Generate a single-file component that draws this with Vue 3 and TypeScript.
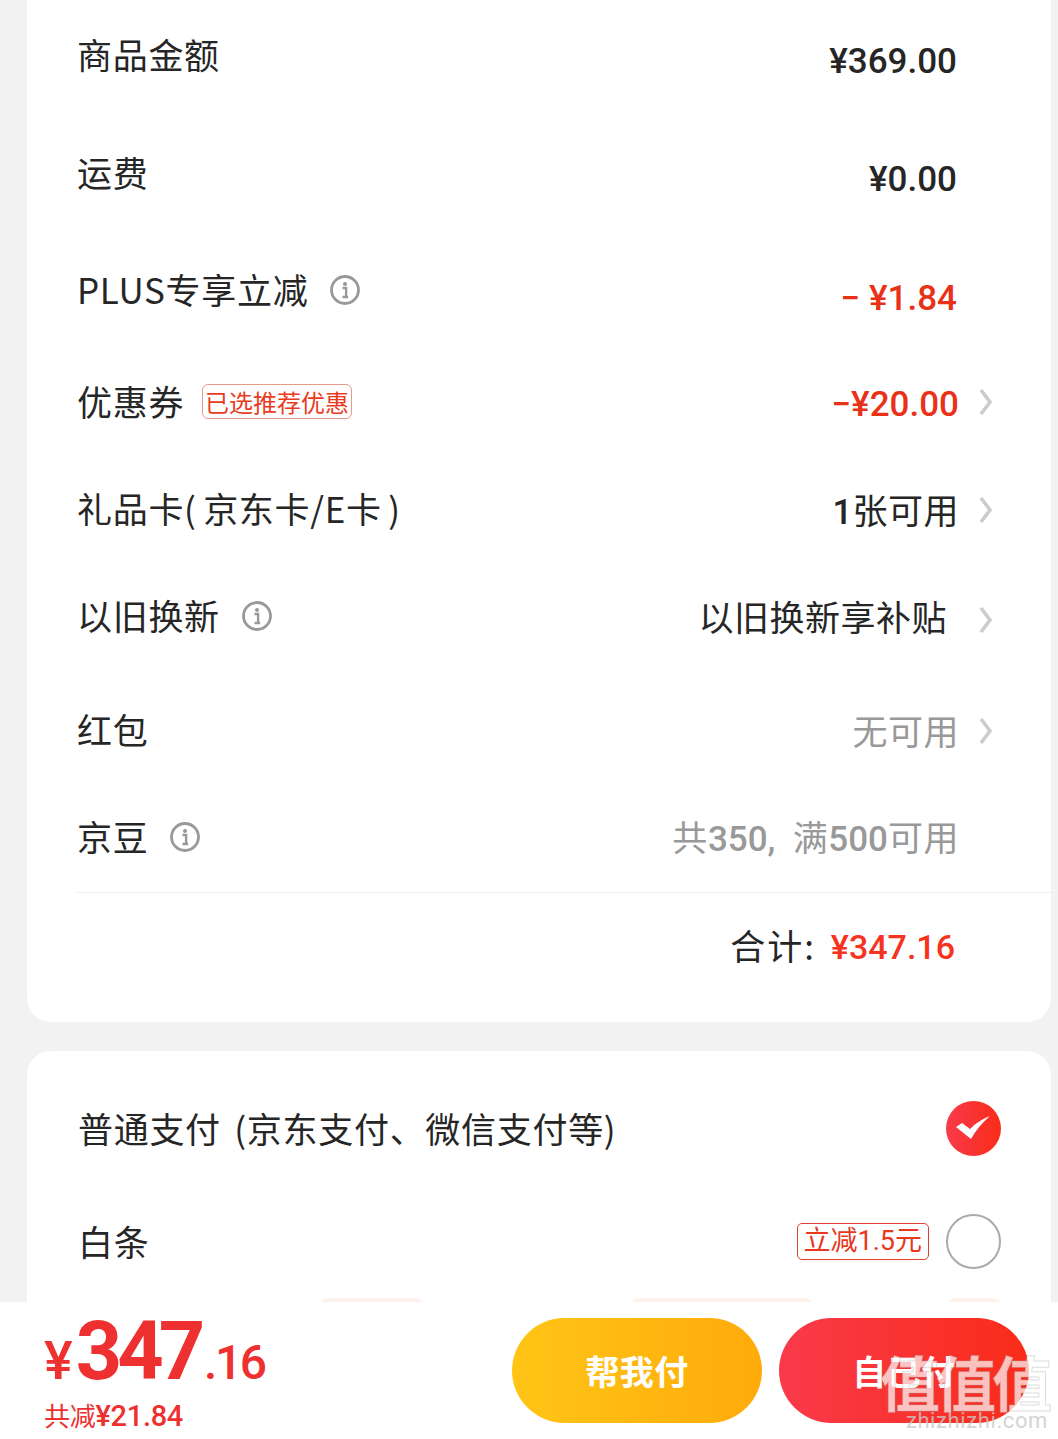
<script setup lang="ts">
interface Row {
  label: string
  height: number
  value: string
  tone?: 'red' | 'grey'
  info?: boolean
  tag?: string
  arrow?: boolean
  drop: number
  right?: number
  arrowDrop?: number
}

const rows: Row[] = [
  { label: '商品金额', height: 109, value: '¥369.00', drop: 15 },
  { label: '运费', height: 127, value: '¥0.00', drop: 15 },
  { label: 'PLUS专享立减', height: 107, value: '− ¥1.84', tone: 'red', info: true, drop: 19 },
  { label: '优惠券', height: 117, value: '−¥20.00', tone: 'red', tag: '已选推荐优惠', arrow: true, drop: 7, right: -2 },
  { label: '礼品卡( 京东卡/E卡 )', height: 97, value: '1张可用', arrow: true, drop: 5, right: -2, arrowDrop: 3 },
  { label: '以旧换新', height: 117, value: '以旧换新享补贴', info: true, arrow: true, drop: 5, right: 10, arrowDrop: 9 },
  { label: '红包', height: 111, value: '无可用', tone: 'grey', arrow: true, drop: 5, right: -2, arrowDrop: 3 },
  { label: '京豆', height: 103, value: '共350,  满500可用', tone: 'grey', info: true, drop: 3, right: -2 },
]

// digits and the yen sign are medium weight, the Chinese stays regular
const parts = (value: string) =>
  value
    .split(/([−¥\d., ]+)/)
    .filter(Boolean)
    .map((text) => ({ text, num: /^[−¥\d., ]+$/.test(text) }))
</script>

<template>
  <div class="page">
    <section class="card summary">
      <div v-for="row in rows" :key="row.label" class="row" :style="{ height: row.height + 'px' }">
        <span class="label">{{ row.label }}</span>
        <svg v-if="row.info" class="info" viewBox="0 0 30 30">
          <circle cx="15" cy="15" r="13.5" fill="none" stroke="#999" stroke-width="2.8" />
          <circle cx="15" cy="9" r="2" fill="#999" />
          <path d="M12.5 13h3.6v8.5M12.5 22h5.6" fill="none" stroke="#999" stroke-width="2.4" />
        </svg>
        <span v-if="row.tag" class="tag">{{ row.tag }}</span>
        <span
          class="value"
          :class="row.tone"
          :style="{ paddingTop: row.drop + 'px', marginRight: (row.right ?? 0) + 'px' }"
        >
          <span v-for="(part, i) in parts(row.value)" :key="i" :class="part.num ? 'num' : 'cjk'">{{ part.text }}</span>
        </span>
        <span class="arrow-slot" :style="{ paddingTop: (row.arrowDrop ?? 0) + 'px' }">
          <svg v-if="row.arrow" class="arrow" viewBox="0 0 14 28">
            <path d="M2 2l9 12-9 12" fill="none" stroke="#ccc" stroke-width="3.6" />
          </svg>
        </span>
      </div>
      <div class="total">
        <span class="total-label">合计:</span>
        <span class="total-value">¥347.16</span>
      </div>
    </section>

    <section class="card pay">
      <div class="pay-row">
        <span class="label pay-label">普通支付 (京东支付、微信支付等)</span>
        <svg class="radio" viewBox="0 0 55 55">
          <defs>
            <linearGradient id="checked" x1="0" y1="0" x2="1" y2="0">
              <stop offset="0" stop-color="#f93a4a" />
              <stop offset="1" stop-color="#fa2c19" />
            </linearGradient>
          </defs>
          <circle cx="27.5" cy="27.5" r="27.5" fill="url(#checked)" />
          <path d="M10 26l6-4 8 6c6-6 12-10 20-13-8 7-14 14-19 23z" fill="#fff" />
        </svg>
      </div>
      <div class="pay-row">
        <span class="label">白条</span>
        <span class="pay-tag">立减1.5元</span>
        <span class="radio empty"></span>
      </div>
      <div class="peek">
        <i class="peek-a"></i>
        <i class="peek-b"></i>
        <i class="peek-c"></i>
      </div>
    </section>

    <footer class="bar">
      <div class="price">
        <div class="amount">
          <span class="yen">¥</span><span class="int">347</span><span class="dec">.16</span>
        </div>
        <div class="saved"><span class="saved-cn">共减</span>¥21.84</div>
      </div>
      <button class="btn help">帮我付</button>
      <button class="btn self">自己付</button>
    </footer>

    <div class="watermark">
      <div class="wm-mark">值值值</div>
      <div class="wm-url">zhizhizhi.com</div>
    </div>
  </div>
</template>

<style>
body {
  background: #f2f2f2;
}
</style>

<style scoped>
.page {
  position: relative;
  width: 1058px;
  height: 1439px;
  overflow: hidden;
  box-sizing: border-box;
  padding: 0 7px 0 27px;
  background: #f2f2f2;
  color: #262626;
  font-family: Roboto, "Noto Sans CJK SC", sans-serif;
}

.card {
  background: #fff;
  border-radius: 24px;
}

.summary {
  border-radius: 0 0 24px 24px;
  padding-left: 50px;
  height: 1022px;
  box-sizing: border-box;
}

.row {
  display: flex;
  align-items: center;
}

.label {
  font-family: "Noto Sans CJK SC", sans-serif;
  font-size: 35px;
  line-height: 44px;
  letter-spacing: 0.7px;
  word-spacing: -2px;
  padding-bottom: 1px;
  white-space: nowrap;
}

.pay-label {
  word-spacing: 5px;
}

.info {
  width: 30px;
  height: 30px;
  margin-left: 22px;
}

.tag {
  margin-left: 18px;
  padding: 0 2px;
  border: 1px solid #e59a8c;
  border-radius: 6px;
  color: #e93b1d;
  font-family: "Noto Sans CJK SC", sans-serif;
  font-size: 24px;
  line-height: 33px;
  white-space: nowrap;
}

.value {
  margin-left: auto;
  font-size: 35px;
  line-height: 44px;
  white-space: pre;
}

.num {
  font-weight: 500;
}

.cjk {
  font-family: "Noto Sans CJK SC", sans-serif;
  font-weight: 400;
  letter-spacing: 0.5px;
}

.value.red {
  color: #e93118;
}

.value.grey {
  color: #999;
}

.arrow-slot {
  display: flex;
  justify-content: flex-end;
  width: 36px;
  margin-right: 58px;
}

.arrow {
  width: 14px;
  height: 28px;
}

.total {
  display: flex;
  justify-content: flex-end;
  align-items: center;
  margin-top: 4px;
  height: 108px;
  border-top: 1px solid #ececec;
  padding-right: 96px;
  font-size: 34px;
  font-weight: 500;
}

.total-label {
  font-family: "Noto Sans CJK SC", sans-serif;
  font-size: 35px;
  font-weight: 400;
  letter-spacing: 2px;
  margin-right: 15px;
  padding-bottom: 6px;
}

.total-value {
  color: #f5331f;
}

.pay {
  margin-top: 29px;
  padding: 21px 50px 0 51px;
  height: 400px;
  box-sizing: border-box;
}

.pay-row {
  display: flex;
  align-items: center;
  height: 113px;
}

.radio {
  width: 55px;
  height: 55px;
  margin-left: auto;
  flex: none;
}

.radio.empty {
  margin-left: 17px;
  box-sizing: border-box;
  border: 2.5px solid #aaa;
  border-radius: 50%;
}

.pay-tag {
  margin-left: auto;
  padding: 0 6px;
  border: 1px solid #e04030;
  border-radius: 5px;
  color: #e8381e;
  font-size: 27px;
  line-height: 35px;
  white-space: nowrap;
}

.peek {
  display: flex;
  padding-left: 242px;
}

.peek i {
  height: 30px;
  background: #fdf1ec;
  border-radius: 8px;
}

.peek-a {
  width: 105px;
}

.peek-b {
  width: 183px;
  margin-left: 207px;
}

.peek-c {
  width: 53px;
  margin-left: 135px;
}

.bar {
  position: absolute;
  left: 0;
  right: 0;
  bottom: 0;
  height: 137px;
  display: flex;
  align-items: flex-start;
  background: #fff;
  padding: 12px 29px 0 44px;
  box-sizing: border-box;
}

.price {
  margin-right: auto;
  color: #ee3030;
  font-weight: 700;
}

.amount {
  display: flex;
  align-items: baseline;
  height: 76px;
  line-height: 76px;
}

.yen {
  font-size: 54px;
  font-weight: 500;
  margin-right: 3px;
}

.int {
  font-size: 81px;
  letter-spacing: -5px;
}

.dec {
  font-size: 48px;
  font-weight: 500;
  letter-spacing: -2.5px;
  margin-left: 4px;
}

.saved {
  margin-top: 7px;
  font-size: 29px;
  font-weight: 500;
  line-height: 36px;
  letter-spacing: -0.3px;
  white-space: nowrap;
}

.saved-cn {
  font-family: "Noto Sans CJK SC", sans-serif;
  font-size: 26px;
  font-weight: 400;
}

.btn {
  width: 250px;
  height: 105px;
  margin-top: 4px;
  border: none;
  border-radius: 53px;
  color: #fff;
  font-family: "Noto Sans CJK SC", sans-serif;
  font-size: 34px;
  font-weight: 700;
  letter-spacing: 0.5px;
}

.help {
  background: linear-gradient(90deg, #ffc516, #ffab0b);
  margin-right: 17px;
}

.self {
  background: linear-gradient(90deg, #f93a4a, #fa2c19);
}

.watermark {
  position: absolute;
  right: 10px;
  bottom: 5px;
  text-align: right;
  pointer-events: none;
}

.wm-mark {
  color: rgba(255, 255, 255, 0.7);
  font-family: "Noto Sans CJK SC", sans-serif;
  font-size: 60px;
  font-weight: 700;
  line-height: 55px;
  letter-spacing: -4px;
  -webkit-text-stroke: 1px rgba(170, 170, 170, 0.4);
}

.wm-url {
  color: rgba(200, 200, 200, 0.8);
  font-size: 22px;
  line-height: 26px;
  letter-spacing: 0.6px;
}
</style>
